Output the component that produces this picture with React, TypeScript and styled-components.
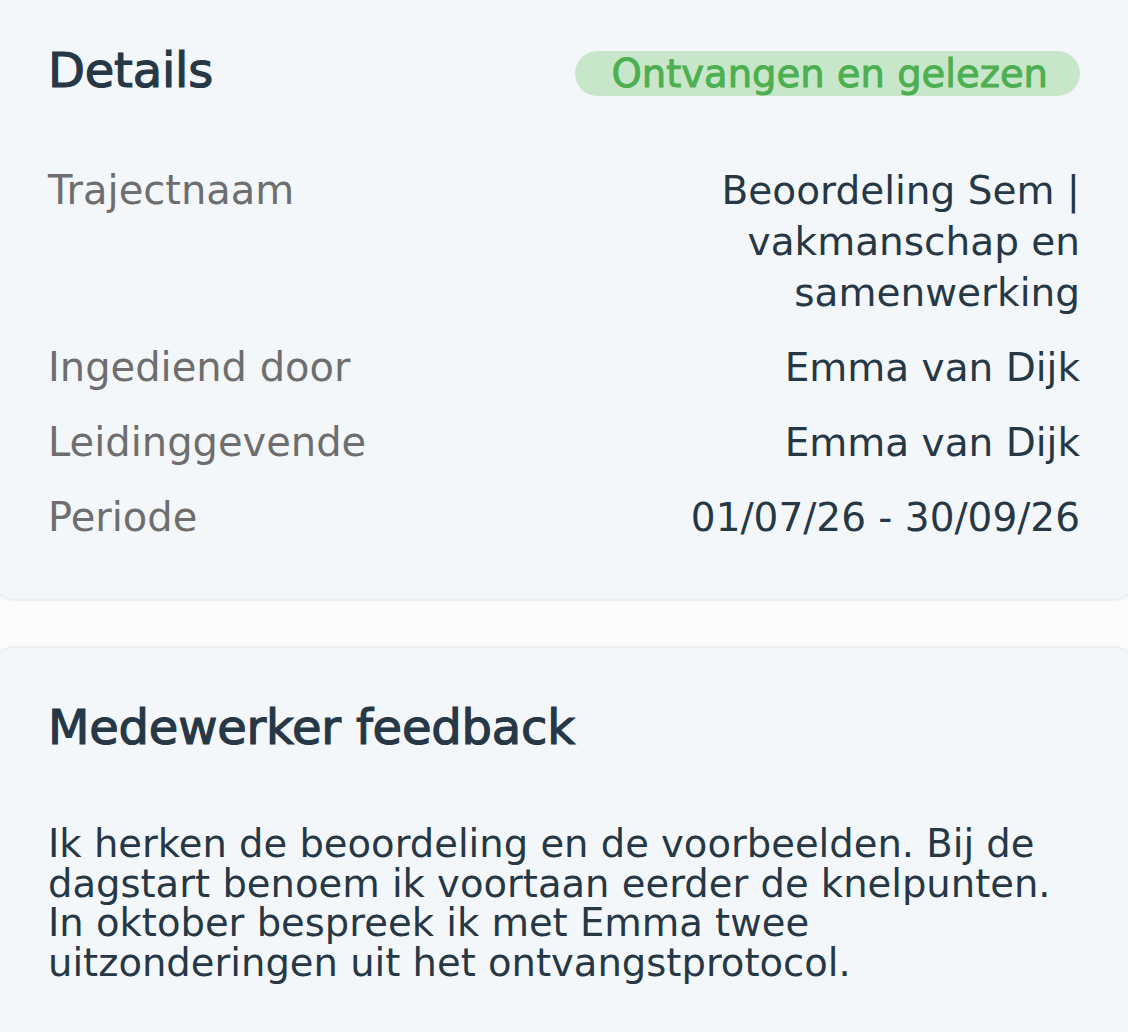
import React from "react";
import styled, { createGlobalStyle } from "styled-components";

const GlobalStyle = createGlobalStyle`
  html, body {
    margin: 0;
    padding: 0;
    background: #fcfcfc;
    overflow: hidden;
  }
  body {
    font-family: "DejaVu Sans", "Liberation Sans", sans-serif;
    color: #263746;
  }
`;

const Page = styled.div`
  display: flex;
  flex-direction: column;
  gap: 45px;
  margin: -30px -10px 0;
`;

const Card = styled.section<{ $top: number; $bottom: number }>`
  background: #f4f7fa;
  border: 2px solid #eceff3;
  border-radius: 26px;
  box-shadow: 0 0 4px rgba(0, 0, 0, 0.035);
  padding: ${(p) => p.$top}px 56px ${(p) => p.$bottom}px;
`;

const HeaderRow = styled.div`
  display: flex;
  align-items: center;
  justify-content: space-between;
`;

const Title = styled.h2`
  margin: 0;
  font-size: 48px;
  line-height: 58px;
  font-weight: 400;
  -webkit-text-stroke: 1.2px #263746;
  color: #263746;
  letter-spacing: -0.2px;
`;

const Badge = styled.span`
  display: inline-flex;
  align-items: center;
  height: 45px;
  margin-top: 6px;
  padding: 0 32px 0 37px;
  border-radius: 23px;
  background: #c8e6c9;
  color: #4caf50;
  font-size: 38.5px;
  line-height: 45px;
  -webkit-text-stroke: 0.9px #4caf50;
  white-space: nowrap;
`;

const Rows = styled.dl`
  margin: 66px 0 0;
  display: flex;
  flex-direction: column;
  gap: 24px;
`;

const Row = styled.div`
  display: grid;
  grid-template-columns: 1fr 1fr;
  align-items: start;
`;

const Label = styled.dt`
  margin: 0;
  font-size: 40px;
  line-height: 51px;
  color: #6e6e6e;
  white-space: nowrap;
`;

const Value = styled.dd`
  margin: 0;
  font-size: 39px;
  line-height: 51px;
  color: #263746;
  text-align: right;
`;

const Paragraph = styled.p`
  margin: 68px 0 0;
  font-size: 38.5px;
  line-height: 39.5px;
  color: #263746;
`;

const details = [
  { label: "Trajectnaam", value: "Beoordeling Sem | vakmanschap en samenwerking" },
  { label: "Ingediend door", value: "Emma van Dijk" },
  { label: "Leidinggevende", value: "Emma van Dijk" },
  { label: "Periode", value: "01/07/26 - 30/09/26" },
];

export default function App() {
  return (
    <>
      <GlobalStyle />
      <Page>
        <Card $top={69} $bottom={56}>
          <HeaderRow>
            <Title>Details</Title>
            <Badge>Ontvangen en gelezen</Badge>
          </HeaderRow>
          <Rows>
            {details.map((d) => (
              <Row key={d.label}>
                <Label>{d.label}</Label>
                <Value>{d.value}</Value>
              </Row>
            ))}
          </Rows>
        </Card>
        <Card $top={50} $bottom={60}>
          <Title>Medewerker feedback</Title>
          <Paragraph>
            Ik herken de beoordeling en de voorbeelden. Bij de dagstart benoem ik
            voortaan eerder de knelpunten. In oktober bespreek ik met Emma twee
            uitzonderingen uit het ontvangstprotocol.
          </Paragraph>
        </Card>
      </Page>
    </>
  );
}
